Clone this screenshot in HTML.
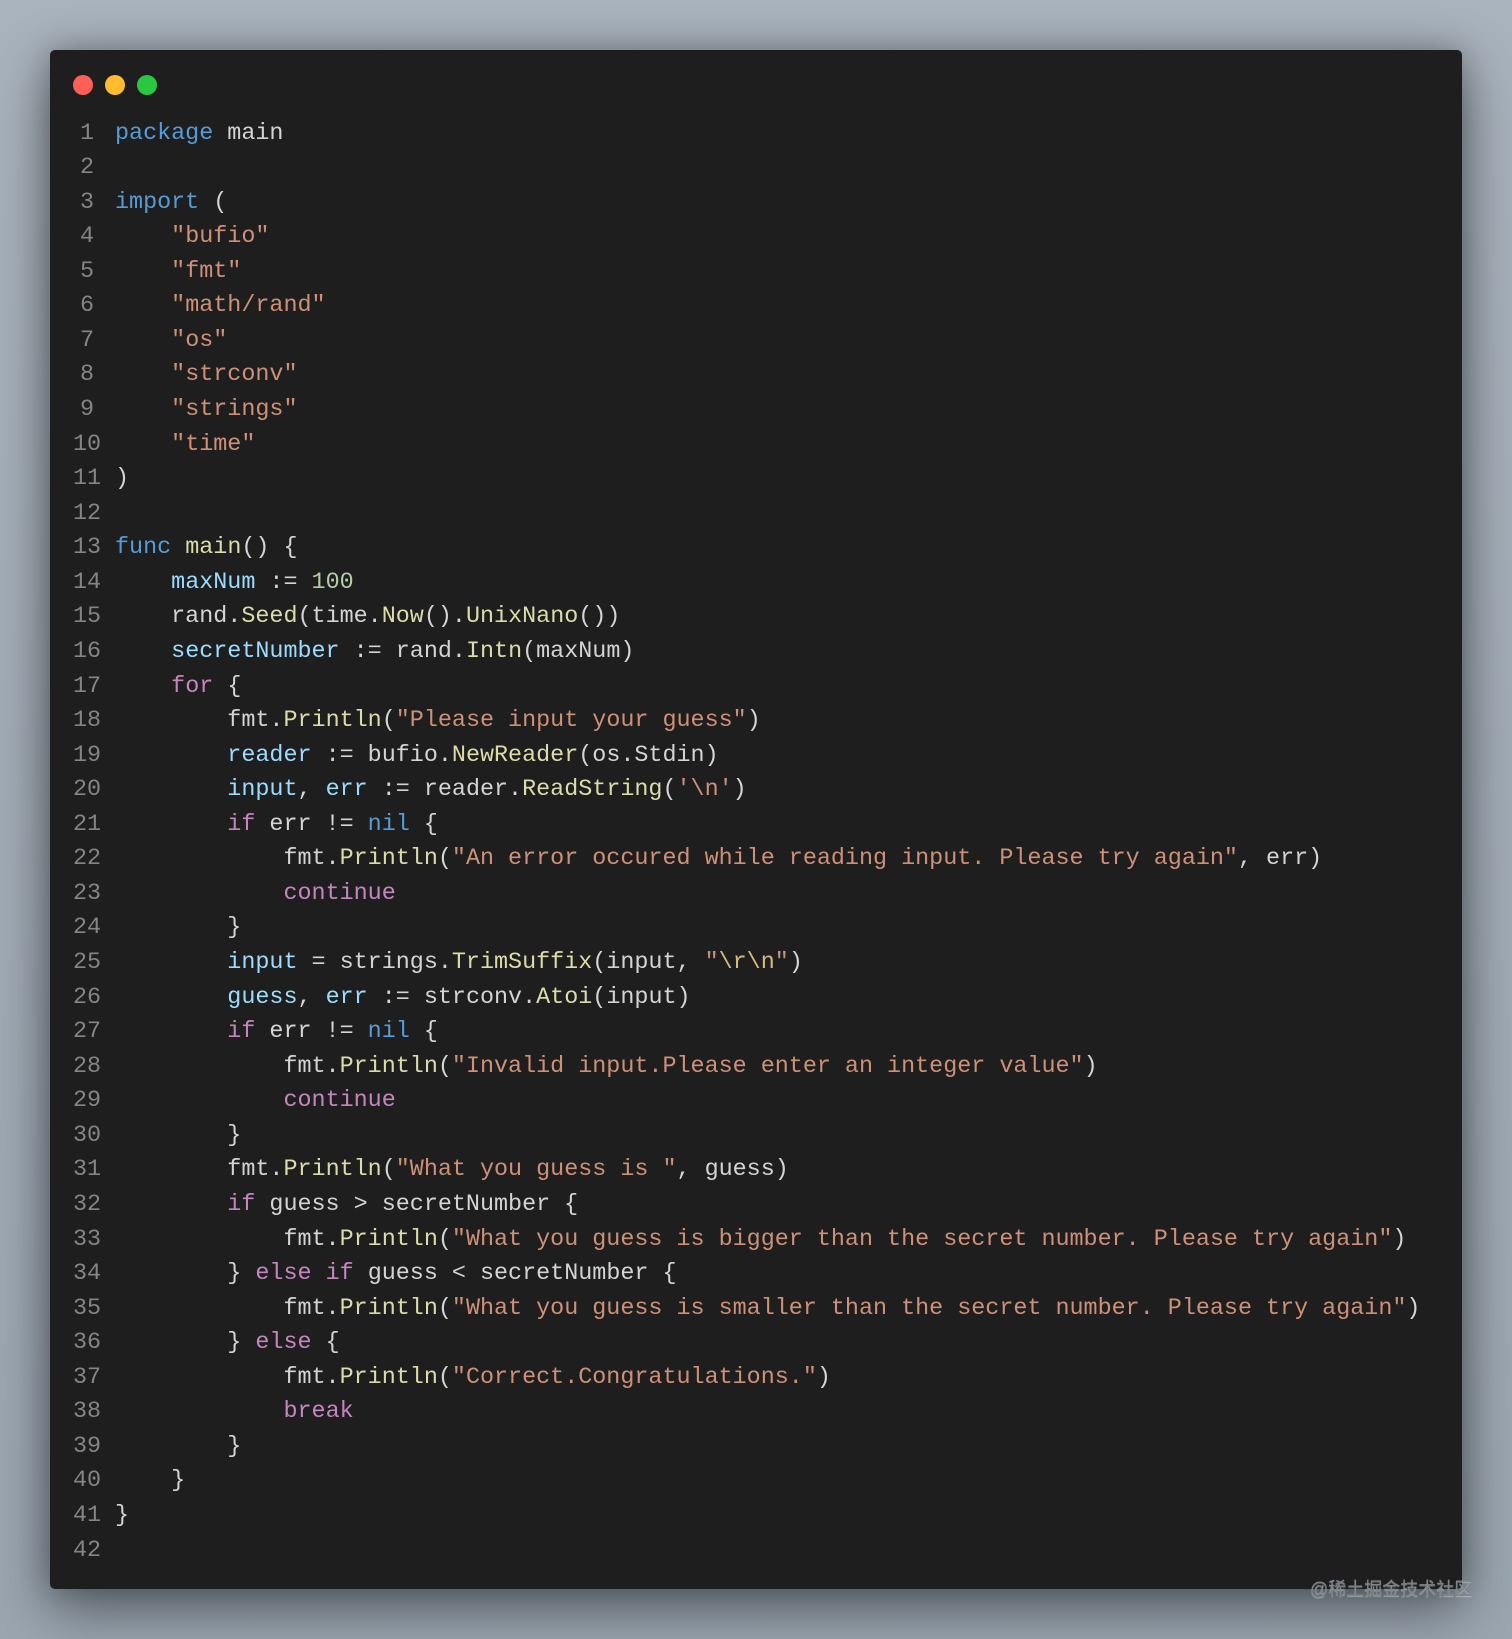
<!DOCTYPE html>
<html><head><meta charset="utf-8">
<style>
html,body{margin:0;padding:0}
body{width:1512px;height:1639px;background:linear-gradient(180deg,#a9b3bd 0%,#9ba6b1 100%);position:relative;overflow:hidden;font-family:"Liberation Mono",monospace}
.win{position:absolute;left:50px;top:50px;width:1412px;height:1539px;background:#1e1e1e;border-radius:5px;box-shadow:0 20px 60px rgba(0,0,0,.45),0 0 30px rgba(0,0,0,.25)}
.dot{position:absolute;top:75px;width:20px;height:20px;border-radius:50%}
.code{position:absolute;left:115px;top:116.5px;font-size:23.4px;line-height:34.56px;white-space:pre;color:#d4d4d4}
.ln{position:absolute;left:72px;top:116.5px;width:30px;text-align:center;font-size:23.4px;line-height:34.56px;color:#858585;white-space:pre}
.k{color:#569cd6}.c{color:#c586c0}.s{color:#ce9178}.f{color:#dcdcaa}.v{color:#9cdcfe}.n{color:#b5cea8}.e{color:#d7ba7d}
.wm{position:absolute;left:1310px;top:1575px;font-family:"Liberation Sans","Noto Sans CJK SC",sans-serif;font-size:18px;color:#7d858d;text-shadow:0 1px 1px rgba(255,255,255,.4)}
</style></head><body>
<div class="win"></div>
<div class="dot" style="left:73px;background:#fe5f57"></div>
<div class="dot" style="left:105px;background:#febc2e"></div>
<div class="dot" style="left:137px;background:#28c840"></div>
<div class="ln">1
2
3
4
5
6
7
8
9
10
11
12
13
14
15
16
17
18
19
20
21
22
23
24
25
26
27
28
29
30
31
32
33
34
35
36
37
38
39
40
41
42</div>
<div class="code"><span class="k">package</span> main

<span class="k">import</span> (
    <span class="s">"bufio"</span>
    <span class="s">"fmt"</span>
    <span class="s">"math/rand"</span>
    <span class="s">"os"</span>
    <span class="s">"strconv"</span>
    <span class="s">"strings"</span>
    <span class="s">"time"</span>
)

<span class="k">func</span> <span class="f">main</span>() {
    <span class="v">maxNum</span> := <span class="n">100</span>
    rand.<span class="f">Seed</span>(time.<span class="f">Now</span>().<span class="f">UnixNano</span>())
    <span class="v">secretNumber</span> := rand.<span class="f">Intn</span>(maxNum)
    <span class="c">for</span> {
        fmt.<span class="f">Println</span>(<span class="s">"Please input your guess"</span>)
        <span class="v">reader</span> := bufio.<span class="f">NewReader</span>(os.Stdin)
        <span class="v">input</span>, <span class="v">err</span> := reader.<span class="f">ReadString</span>(<span class="s">'\n'</span>)
        <span class="c">if</span> err != <span class="k">nil</span> {
            fmt.<span class="f">Println</span>(<span class="s">"An error occured while reading input. Please try again"</span>, err)
            <span class="c">continue</span>
        }
        <span class="v">input</span> = strings.<span class="f">TrimSuffix</span>(input, <span class="s">"</span><span class="e">\r\n</span><span class="s">"</span>)
        <span class="v">guess</span>, <span class="v">err</span> := strconv.<span class="f">Atoi</span>(input)
        <span class="c">if</span> err != <span class="k">nil</span> {
            fmt.<span class="f">Println</span>(<span class="s">"Invalid input.Please enter an integer value"</span>)
            <span class="c">continue</span>
        }
        fmt.<span class="f">Println</span>(<span class="s">"What you guess is "</span>, guess)
        <span class="c">if</span> guess &gt; secretNumber {
            fmt.<span class="f">Println</span>(<span class="s">"What you guess is bigger than the secret number. Please try again"</span>)
        } <span class="c">else</span> <span class="c">if</span> guess &lt; secretNumber {
            fmt.<span class="f">Println</span>(<span class="s">"What you guess is smaller than the secret number. Please try again"</span>)
        } <span class="c">else</span> {
            fmt.<span class="f">Println</span>(<span class="s">"Correct.Congratulations."</span>)
            <span class="c">break</span>
        }
    }
}
</div>
<div class="wm">@稀土掘金技术社区</div>
</body></html>
